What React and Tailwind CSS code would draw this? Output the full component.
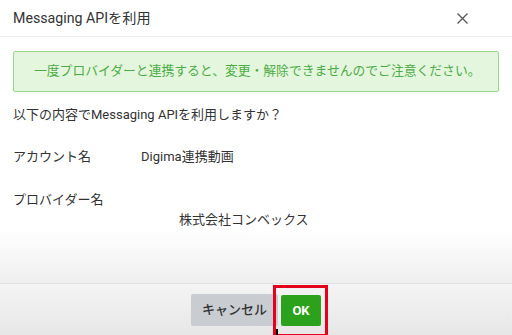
export default function App() {
  return (
    <div className="w-[512px] h-[335px] overflow-hidden flex flex-col bg-white text-[#333] font-['Roboto','Noto_Sans_CJK_JP',sans-serif]">
      <div className="h-[37px] shrink-0 flex items-center justify-between pl-[13px] pr-[44px] border-b border-[#ececec]">
        <span className="text-[14.2px] leading-none">Messaging APIを利用</span>
        <svg width="11" height="11" viewBox="0 0 11 11" className="text-[#555]">
          <path d="M0.5 0.5L10.5 10.5M10.5 0.5L0.5 10.5" stroke="currentColor" strokeWidth="1.3" />
        </svg>
      </div>
      <div className="flex-1 flex flex-col px-[13px] pt-[14px] bg-linear-to-b from-white from-78% to-[#efefef] border-b border-[#e0e0e0]">
        <div className="h-[41px] pl-[20px] flex items-center border border-[#9ad68c] bg-[#e4f6de] rounded-[2px] text-[#4cad46] text-[12.8px] leading-none">
          一度プロバイダーと連携すると、変更・解除できませんのでご注意ください。
        </div>
        <div className="mt-[15px] text-[13px] leading-[16px]">以下の内容でMessaging APIを利用しますか？</div>
        <div className="mt-[26px] flex text-[13px] leading-[16px]">
          <span className="w-[128px]">アカウント名</span>
          <span>Digima連携動画</span>
        </div>
        <div className="mt-[27px] text-[13px] leading-[16px]">プロバイダー名</div>
        <div className="mt-[4px] pl-[166px] text-[13px] leading-[16px]">株式会社コンベックス</div>
      </div>
      <div className="h-[51px] shrink-0 flex justify-center items-start pt-[10px] gap-[3px] bg-linear-to-b from-[#f4f4f4] to-[#e7e7e7] relative">
        <button className="w-[87px] h-[32px] rounded-[2px] bg-[#c9cdd2] text-[13px] text-[#333] font-medium">キャンセル</button>
        <div className="relative">
          <button className="mt-[1px] w-[40px] h-[31px] rounded-[2px] bg-[#2ca11c] text-[13px] text-white font-bold">OK</button>
          <div className="absolute left-[-8px] top-[-9px] w-[55px] h-[52px] border-[3px] border-[#e5001c]"></div>
          <div className="absolute left-[-5px] top-[35px] w-[2px] h-[6px] bg-black"></div>
        </div>
      </div>
    </div>
  );
}
